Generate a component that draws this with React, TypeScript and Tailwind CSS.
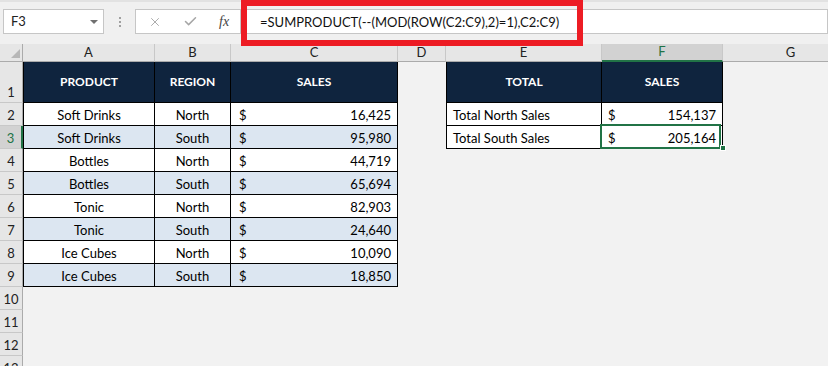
import React from "react";
import { X, Check } from "lucide-react";

interface DataRow {
  product: string;
  region: string;
  sales: string;
}

const data: DataRow[] = [
  { product: "Soft Drinks", region: "North", sales: "16,425" },
  { product: "Soft Drinks", region: "South", sales: "95,980" },
  { product: "Bottles", region: "North", sales: "44,719" },
  { product: "Bottles", region: "South", sales: "65,694" },
  { product: "Tonic", region: "North", sales: "82,903" },
  { product: "Tonic", region: "South", sales: "24,640" },
  { product: "Ice Cubes", region: "North", sales: "10,090" },
  { product: "Ice Cubes", region: "South", sales: "18,850" },
];

const totals = [
  { label: "Total North Sales", value: "154,137" },
  { label: "Total South Sales", value: "205,164" },
];

const RowHead = (props: { n: number }) => {
  const sel = props.n === 3;
  return (
    <div
      className={
        "w-[23px] shrink-0 flex items-end justify-center pb-[3px] text-[13px] leading-none border-b border-b-[#c8c8c8] " +
        (sel
          ? "bg-[#d2d2d2] text-[#217346] border-r-2 border-r-[#217346]"
          : "bg-[#e6e6e6] text-[#222] border-r border-r-[#ababab]")
      }
    >
      {props.n}
    </div>
  );
};

const ColHead = (props: { label: string; w: string; sel?: boolean }) => (
  <div
    className={
      props.w +
      " shrink-0 h-[18px] flex items-center justify-center text-[13px] border-r border-r-[#c8c8c8] " +
      (props.sel
        ? "bg-[#d2d2d2] text-[#217346] border-b-2 border-b-[#217346]"
        : "bg-[#e6e6e6] text-[#222] border-b border-b-[#ababab]")
    }
  >
    {props.label}
  </div>
);

const Empty = (props: { w: string }) => <div className={props.w + " shrink-0"} />;

export default function App() {
  return (
    <div className="w-[828px] h-[366px] overflow-hidden bg-[#f2f2f2] font-['Lato',sans-serif] text-black">
      {/* formula bar */}
      <div className="relative h-[44px] bg-[#f0f0f0] border-t-2 border-t-[#e2e2e2] flex items-start pt-[7px] pl-[3px]">
        <div className="w-[101px] h-[25px] bg-white border border-[#c6c6c6] flex items-center justify-between pl-[7px] pr-[5px] text-[13px] text-[#222]">
          <span>F3</span>
          <span className="w-0 h-0 border-l-4 border-r-4 border-t-4 border-l-transparent border-r-transparent border-t-[#707070]" />
        </div>
        <div className="w-[31px] h-[25px] flex flex-col items-center justify-center gap-[2px]">
          <span className="w-[2px] h-[2px] bg-[#a0a0a0]" />
          <span className="w-[2px] h-[2px] bg-[#a0a0a0]" />
          <span className="w-[2px] h-[2px] bg-[#a0a0a0]" />
        </div>
        <div className="w-[106px] h-[25px] bg-white border border-[#c6c6c6] flex items-center pl-[12px]">
          <X className="w-[14px] h-[14px] text-[#a6a6a6]" strokeWidth={1.6} />
          <Check className="w-[15px] h-[15px] text-[#a6a6a6] ml-[21px]" strokeWidth={2.4} />
          <span className="ml-[21px] font-['Liberation_Serif',serif] italic text-[14px] text-[#444]">fx</span>
        </div>
        <div className="flex-1 h-[25px] ml-[1px] bg-white border border-[#c6c6c6] flex items-center pl-[17px] pt-[2px] text-[13px] text-[#111]">
          =SUMPRODUCT(--(MOD(ROW(C2:C9),2)=1),C2:C9)
        </div>
        <div className="absolute left-[241px] -top-[2px] w-[342px] h-[46px] border-[6px] border-[#ed1c24]" />
      </div>

      {/* column headers */}
      <div className="flex">
        <div className="w-[23px] shrink-0 h-[18px] bg-[#e6e6e6] border-r border-b border-[#ababab] flex items-end justify-end pr-[2px] pb-[3px]">
          <svg width="9" height="9" viewBox="0 0 9 9">
            <path d="M9 0 L9 9 L0 9 Z" fill="#b7b7b7" />
          </svg>
        </div>
        <ColHead label="A" w="w-[132px]" />
        <ColHead label="B" w="w-[76px]" />
        <ColHead label="C" w="w-[167px]" />
        <ColHead label="D" w="w-[48px]" />
        <ColHead label="E" w="w-[156px]" />
        <ColHead label="F" w="w-[121px]" sel />
        <ColHead label="G" w="w-[136px]" />
      </div>

      {/* row 1: headers */}
      <div className="flex h-[41px]">
        <RowHead n={1} />
        <div className="w-[132px] shrink-0 bg-[#0f243e] border-l border-r border-b border-black flex items-center justify-center text-white font-bold text-[12px]">
          PRODUCT
        </div>
        <div className="w-[76px] shrink-0 bg-[#0f243e] border-r border-b border-black flex items-center justify-center text-white font-bold text-[12px]">
          REGION
        </div>
        <div className="w-[167px] shrink-0 bg-[#0f243e] border-r border-b border-black flex items-center justify-center text-white font-bold text-[12px]">
          SALES
        </div>
        <Empty w="w-[48px]" />
        <div className="w-[156px] shrink-0 bg-[#0f243e] border-l border-r border-b border-black flex items-center justify-center text-white font-bold text-[12px]">
          TOTAL
        </div>
        <div className="w-[121px] shrink-0 bg-[#0f243e] border-r border-b border-black flex items-center justify-center text-white font-bold text-[12px]">
          SALES
        </div>
      </div>

      {/* data rows */}
      {data.map((d, i) => {
        const n = i + 2;
        const bg = i % 2 === 1 ? "bg-[#dce6f1]" : "bg-white";
        const t = totals[i];
        return (
          <div className="flex h-[23px] text-[13px]" key={n}>
            <RowHead n={n} />
            <div className={"w-[132px] shrink-0 border-l border-r border-b border-black flex items-end justify-center " + bg}>
              {d.product}
            </div>
            <div className={"w-[76px] shrink-0 border-r border-b border-black flex items-end justify-center " + bg}>
              {d.region}
            </div>
            <div className={"w-[167px] shrink-0 border-r border-b border-black flex items-end justify-between pl-2 pr-[6px] " + bg}>
              <span>$</span>
              <span>{d.sales}</span>
            </div>
            <Empty w="w-[48px]" />
            {t ? (
              <>
                <div className="w-[156px] shrink-0 bg-white border-l border-r border-b border-black flex items-end pl-[6px]">
                  {t.label}
                </div>
                <div className="relative w-[121px] shrink-0 bg-white border-r border-b border-black flex items-end justify-between pl-[6px] pr-[6px]">
                  <span>$</span>
                  <span>{t.value}</span>
                  {n === 3 ? (
                    <>
                      <div className="absolute -left-[2px] -top-[2px] w-[121px] h-[25px] border-2 border-[#217346]" />
                      <div className="absolute -right-[4px] -bottom-[3px] w-[6px] h-[6px] bg-[#217346] border border-white" />
                    </>
                  ) : null}
                </div>
              </>
            ) : null}
          </div>
        );
      })}

      {/* empty rows */}
      {[10, 11, 12, 13].map((n) => (
        <div className="flex h-[23px]" key={n}>
          <RowHead n={n} />
        </div>
      ))}
    </div>
  );
}
